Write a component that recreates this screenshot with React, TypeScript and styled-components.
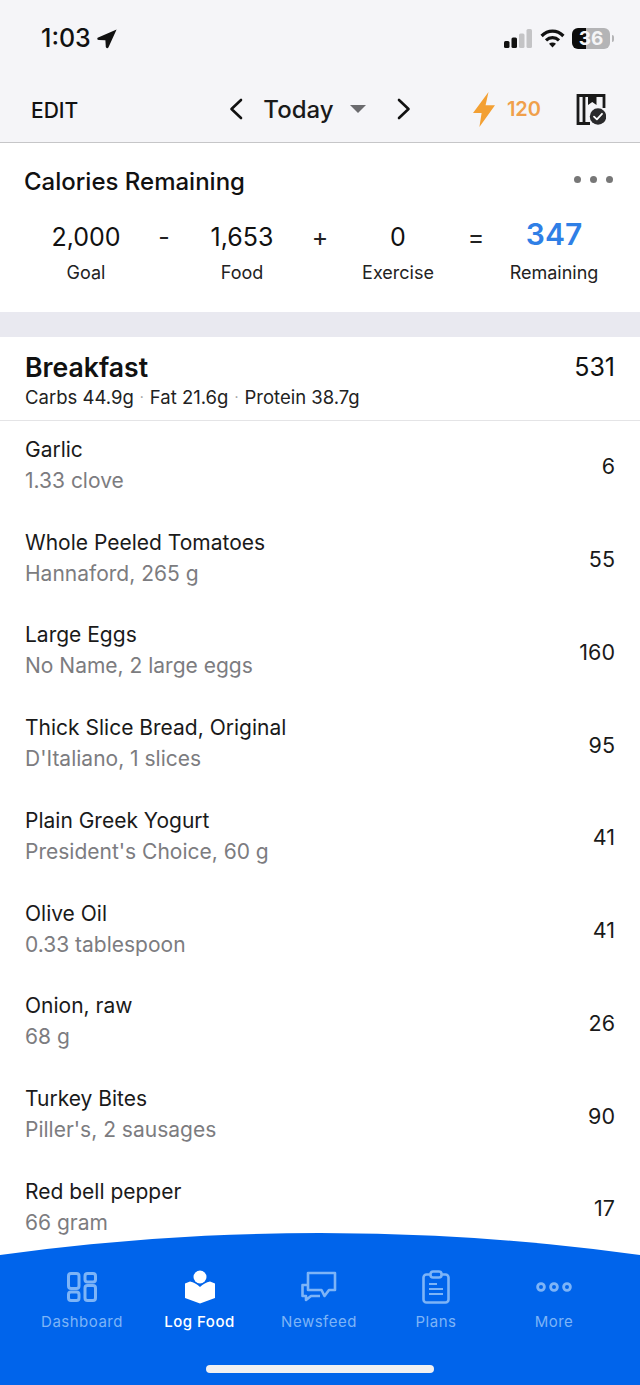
import styled, { createGlobalStyle } from "styled-components"

const GlobalStyle = createGlobalStyle`
  html, body {
    margin: 0;
    padding: 0;
    background: #fff;
  }
  * {
    box-sizing: border-box;
  }
`

const Page = styled.div`
  position: relative;
  width: 640px;
  height: 1385px;
  overflow: hidden;
  background: #fff;
  color: #111;
  font-family: Inter, "Liberation Sans", sans-serif;
`

const Header = styled.header`
  height: 143px;
  background: #f5f5f8;
  border-bottom: 1px solid #c6c6c8;
`

const StatusBar = styled.div`
  height: 76px;
  padding: 22px 26px 0 41px;
  display: flex;
  justify-content: space-between;
  align-items: flex-start;
`

const Clock = styled.div`
  display: flex;
  align-items: center;
  gap: 6px;
  font-size: 25px;
  line-height: 33px;
  font-weight: 500;
`

const StatusIcons = styled.div`
  display: flex;
  align-items: center;
  gap: 7px;
  height: 32px;
`

const Battery = styled.div`
  width: 38px;
  height: 21px;
  border-radius: 6px;
  overflow: hidden;
  background: linear-gradient(90deg, #0c0c0c 0 38%, #b4b4b6 38% 100%);
  color: #f4f4f6;
  font-size: 19px;
  line-height: 21px;
  font-weight: 700;
  text-align: center;
`

const BatteryCap = styled.div`
  width: 2px;
  height: 7px;
  margin-left: -5px;
  border-radius: 0 2px 2px 0;
  background: #b4b4b6;
`

const NavBar = styled.div`
  height: 66px;
  padding: 0 34px 0 31px;
  display: flex;
  align-items: center;
  justify-content: space-between;
`

const EditButton = styled.div`
  width: 136px;
  font-size: 21px;
  font-weight: 500;
  padding-top: 2px;
`

const DatePicker = styled.div`
  display: flex;
  align-items: center;
`

const DateLabel = styled.div`
  margin-left: 20px;
  font-size: 24px;
  font-weight: 500;
  color: #1a1a1a;
`

const Caret = styled.div`
  margin: 0 31px 0 16px;
  width: 0;
  height: 0;
  border-left: 8px solid transparent;
  border-right: 8px solid transparent;
  border-top: 8px solid #6b6b6e;
`

const NavRight = styled.div`
  display: flex;
  align-items: center;
`

const Streak = styled.div`
  display: flex;
  align-items: center;
  gap: 12px;
  margin-right: 35px;
  color: #f0a04b;
  font-size: 20px;
  font-weight: 600;
`

const Summary = styled.section`
  height: 169px;
  padding: 23px 24px 0;
`

const SummaryHead = styled.div`
  display: flex;
  justify-content: space-between;
  align-items: center;
`

const SummaryTitle = styled.h2`
  margin: 0;
  font-size: 24px;
  line-height: 32px;
  font-weight: 500;
`

const Dots = styled.div`
  display: flex;
  gap: 9px;
  margin-right: 3px;
  margin-bottom: 6px;
`

const Dot = styled.span`
  width: 7px;
  height: 7px;
  border-radius: 50%;
  background: #777;
`

const Equation = styled.div`
  margin-top: 21px;
  display: grid;
  grid-template-columns: 156px 156px 156px 156px;
  margin-left: -16px;
`

const Term = styled.div`
  position: relative;
  display: flex;
  flex-direction: column;
  align-items: center;
`

const TermValue = styled.div<{ $accent?: boolean }>`
  height: 36px;
  display: flex;
  align-items: center;
  font-size: ${(p) => (p.$accent ? "30px" : "25px")};
  font-weight: ${(p) => (p.$accent ? 600 : 400)};
  color: ${(p) => (p.$accent ? "#2f7fe6" : "#111")};
  padding-bottom: ${(p) => (p.$accent ? "7px" : "0")};
`

const TermLabel = styled.div`
  margin-top: 6px;
  font-size: 18px;
  line-height: 24px;
  color: #222;
`

const Operator = styled.span`
  position: absolute;
  right: 0;
  top: 4px;
  transform: translateX(50%);
  font-size: 25px;
  line-height: 28px;
  color: #222;
`

const SectionGap = styled.div`
  height: 25px;
  background: #e9e9f0;
`

const MealHead = styled.div`
  height: 84px;
  padding: 12px 25px 0;
  border-bottom: 1px solid #e4e4e6;
`

const MealTop = styled.div`
  display: flex;
  justify-content: space-between;
  align-items: center;
  height: 36px;
`

const MealName = styled.h3`
  margin: 0;
  font-size: 26.6px;
  font-weight: 600;
`

const MealCalories = styled.div`
  font-size: 25px;
`

const Macros = styled.div`
  display: flex;
  align-items: center;
  font-size: 18.5px;
  line-height: 24px;
  color: #222;
`

const MacroSep = styled.span`
  margin: 0 6px;
  color: #999;
  font-size: 14px;
`

const FoodRow = styled.div`
  height: 92.75px;
  padding: 13px 25px 0;
  display: flex;
  justify-content: space-between;
  align-items: center;
`

const FoodInfo = styled.div`
  display: flex;
  flex-direction: column;
  margin-top: -18px;
`

const FoodName = styled.div`
  font-size: 21px;
  line-height: 31px;
  color: #1a1a1a;
`

const FoodDetail = styled.div`
  font-size: 21px;
  line-height: 31px;
  color: #7c7c80;
`

const FoodCalories = styled.div`
  font-size: 21.5px;
  color: #1a1a1a;
  margin-top: -15px;
`

const BottomBar = styled.nav`
  position: absolute;
  left: 0;
  right: 0;
  bottom: 0;
  height: 152px;
  overflow: hidden;
  padding: 38px 0 0 23px;
  display: grid;
  grid-template-columns: 118px 117px 122px 112px 124px;
  align-items: start;

  &::before {
    content: "";
    position: absolute;
    top: 0;
    left: 50%;
    width: 4680px;
    height: 4680px;
    margin-left: -2340px;
    border-radius: 50%;
    background: #0064eb;
  }
`

const Tab = styled.div<{ $active?: boolean }>`
  position: relative;
  display: flex;
  flex-direction: column;
  align-items: center;
  color: ${(p) => (p.$active ? "#fff" : "#7db4f7")};
  font-size: 15px;
  line-height: 20px;
  font-weight: ${(p) => (p.$active ? 500 : 400)};
  letter-spacing: 0.5px;
`

const TabIcon = styled.div`
  height: 32px;
  margin-bottom: 9px;
  display: flex;
  align-items: center;
  justify-content: center;
`

const HomeIndicator = styled.div`
  position: absolute;
  left: 206px;
  bottom: 12px;
  width: 228px;
  height: 8px;
  border-radius: 4px;
  background: #f0f0f2;
`

const foods = [
  { name: "Garlic", detail: "1.33 clove", calories: 6 },
  { name: "Whole Peeled Tomatoes", detail: "Hannaford, 265 g", calories: 55 },
  { name: "Large Eggs", detail: "No Name, 2 large eggs", calories: 160 },
  { name: "Thick Slice Bread, Original", detail: "D'Italiano, 1 slices", calories: 95 },
  { name: "Plain Greek Yogurt", detail: "President's Choice, 60 g", calories: 41 },
  { name: "Olive Oil", detail: "0.33 tablespoon", calories: 41 },
  { name: "Onion, raw", detail: "68 g", calories: 26 },
  { name: "Turkey Bites", detail: "Piller's, 2 sausages", calories: 90 },
  { name: "Red bell pepper", detail: "66 gram", calories: 17 },
]

const terms = [
  { value: "2,000", label: "Goal", op: "-" },
  { value: "1,653", label: "Food", op: "+" },
  { value: "0", label: "Exercise", op: "=" },
  { value: "347", label: "Remaining", accent: true },
]

function LocationArrow() {
  return (
    <svg width="20" height="20" viewBox="0 0 20 20">
      <path d="M19.6 0.4 L0.6 8.8 Q-0.4 11 2 11 L8.4 11.2 L8.8 18 Q10 20.4 11.4 18.6 Z" fill="#111" />
    </svg>
  )
}

function SignalIcon() {
  return (
    <svg width="29" height="19" viewBox="0 0 29 19">
      <rect x="0" y="12" width="5.5" height="7" rx="1.5" fill="#111" />
      <rect x="7.5" y="8.5" width="5.5" height="10.5" rx="1.5" fill="#111" />
      <rect x="15" y="4.5" width="5.5" height="14.5" rx="1.5" fill="#c4c4c6" />
      <rect x="22.5" y="0" width="5.5" height="19" rx="1.5" fill="#c4c4c6" />
    </svg>
  )
}

function WifiIcon() {
  return (
    <svg width="25" height="19" viewBox="0 0 25 19" fill="none" stroke="#111" strokeWidth="3.2">
      <path d="M1.6 7 C8 0.6 17 0.6 23.4 7" />
      <path d="M6 11.4 C9.8 7.8 15.2 7.8 19 11.4" />
      <path d="M12.5 18.6 L9 14.8 C11 13.2 14 13.2 16 14.8 Z" fill="#111" stroke="none" />
    </svg>
  )
}

function ChevronLeft() {
  return (
    <svg width="14" height="22" viewBox="0 0 14 22" fill="none" stroke="#111" strokeWidth="2.6" strokeLinecap="round" strokeLinejoin="round">
      <path d="M12 2 L2.5 11 L12 20" />
    </svg>
  )
}

function ChevronRight() {
  return (
    <svg width="14" height="22" viewBox="0 0 14 22" fill="none" stroke="#111" strokeWidth="2.6" strokeLinecap="round" strokeLinejoin="round">
      <path d="M2 2 L11.5 11 L2 20" />
    </svg>
  )
}

function BoltIcon() {
  return (
    <svg width="22" height="35" viewBox="0 0 22 35">
      <path d="M15.5 0 L0 21 L8.6 21 L6.4 35 L22 13.2 L12.6 13.2 Z" fill="#f3a033" />
    </svg>
  )
}

function PlannerIcon() {
  return (
    <svg width="30" height="31" viewBox="0 0 30 31">
      <path d="M14 29.5 H2 V1.5 H28 V14" fill="none" stroke="#1a1a1a" strokeWidth="2.8" />
      <path d="M8 1.5 V29.5" fill="none" stroke="#1a1a1a" strokeWidth="2.8" />
      <path d="M12 1 H20.5 V11 L16.25 8 L12 11 Z" fill="#1a1a1a" />
      <circle cx="22" cy="22.5" r="8.2" fill="#2a2a2c" />
      <path d="M18 22.6 L20.9 25.4 L26 19.8" fill="none" stroke="#fff" strokeWidth="1.8" strokeLinecap="round" strokeLinejoin="round" />
    </svg>
  )
}

function DashboardIcon() {
  return (
    <svg width="30" height="30" viewBox="0 0 30 30" fill="none" stroke="#7db4f7" strokeWidth="3">
      <rect x="1.5" y="1.5" width="10.5" height="15" rx="2.5" />
      <rect x="18" y="1.5" width="10.5" height="8.5" rx="2.5" />
      <rect x="1.5" y="20" width="10.5" height="8.5" rx="2.5" />
      <rect x="18" y="13.5" width="10.5" height="15" rx="2.5" />
    </svg>
  )
}

function LogFoodIcon() {
  return (
    <svg width="30" height="34" viewBox="0 0 30 34" fill="#fff">
      <circle cx="15" cy="7" r="6.5" />
      <path d="M0 13.5 L5 11.5 Q10.5 12.5 15 17 Q19.5 12.5 25 11.5 L30 13.5 V28 L15 33.5 L0 28 Z" />
    </svg>
  )
}

function NewsfeedIcon() {
  return (
    <svg width="36" height="32" viewBox="0 0 36 32" fill="none" stroke="#7db4f7" strokeWidth="2.6" strokeLinejoin="round">
      <path d="M7 2 H34 V19 H28 L23.5 25 L20.5 19 H7 Z" />
      <path d="M7 14 H1.5 V25 H5 V29 L10 25 H19" />
    </svg>
  )
}

function PlansIcon() {
  return (
    <svg width="28" height="34" viewBox="0 0 28 34" fill="none" stroke="#7db4f7" strokeWidth="2.6">
      <rect x="1.5" y="4.5" width="25" height="28" rx="3" />
      <rect x="8.5" y="1.5" width="11" height="6" rx="2.5" fill="#0064eb" />
      <path d="M7 14 H15 M7 19 H21 M7 24 H21" strokeWidth="2.2" />
    </svg>
  )
}

function MoreIcon() {
  return (
    <svg width="36" height="10" viewBox="0 0 36 10" fill="none" stroke="#7db4f7" strokeWidth="2.8">
      <circle cx="5" cy="5" r="3.4" />
      <circle cx="18" cy="5" r="3.4" />
      <circle cx="31" cy="5" r="3.4" />
    </svg>
  )
}

export default function App(): JSX.Element {
  return (
    <Page>
      <GlobalStyle />
      <Header>
        <StatusBar>
          <Clock>
            1:03
            <LocationArrow />
          </Clock>
          <StatusIcons>
            <SignalIcon />
            <WifiIcon />
            <Battery>36</Battery>
            <BatteryCap />
          </StatusIcons>
        </StatusBar>
        <NavBar>
          <EditButton>EDIT</EditButton>
          <DatePicker>
            <ChevronLeft />
            <DateLabel>Today</DateLabel>
            <Caret />
            <ChevronRight />
          </DatePicker>
          <NavRight>
            <Streak>
              <BoltIcon />
              120
            </Streak>
            <PlannerIcon />
          </NavRight>
        </NavBar>
      </Header>

      <Summary>
        <SummaryHead>
          <SummaryTitle>Calories Remaining</SummaryTitle>
          <Dots>
            <Dot />
            <Dot />
            <Dot />
          </Dots>
        </SummaryHead>
        <Equation>
          {terms.map((t) => (
            <Term key={t.label}>
              <TermValue $accent={t.accent}>{t.value}</TermValue>
              <TermLabel>{t.label}</TermLabel>
              {t.op && <Operator>{t.op}</Operator>}
            </Term>
          ))}
        </Equation>
      </Summary>

      <SectionGap />

      <MealHead>
        <MealTop>
          <MealName>Breakfast</MealName>
          <MealCalories>531</MealCalories>
        </MealTop>
        <Macros>
          Carbs 44.9g<MacroSep>·</MacroSep>Fat 21.6g<MacroSep>·</MacroSep>Protein 38.7g
        </Macros>
      </MealHead>

      {foods.map((f) => (
        <FoodRow key={f.name}>
          <FoodInfo>
            <FoodName>{f.name}</FoodName>
            <FoodDetail>{f.detail}</FoodDetail>
          </FoodInfo>
          <FoodCalories>{f.calories}</FoodCalories>
        </FoodRow>
      ))}

      <BottomBar>
        <Tab>
          <TabIcon><DashboardIcon /></TabIcon>
          Dashboard
        </Tab>
        <Tab $active>
          <TabIcon><LogFoodIcon /></TabIcon>
          Log Food
        </Tab>
        <Tab>
          <TabIcon><NewsfeedIcon /></TabIcon>
          Newsfeed
        </Tab>
        <Tab>
          <TabIcon><PlansIcon /></TabIcon>
          Plans
        </Tab>
        <Tab>
          <TabIcon><MoreIcon /></TabIcon>
          More
        </Tab>
        <HomeIndicator />
      </BottomBar>
    </Page>
  )
}
